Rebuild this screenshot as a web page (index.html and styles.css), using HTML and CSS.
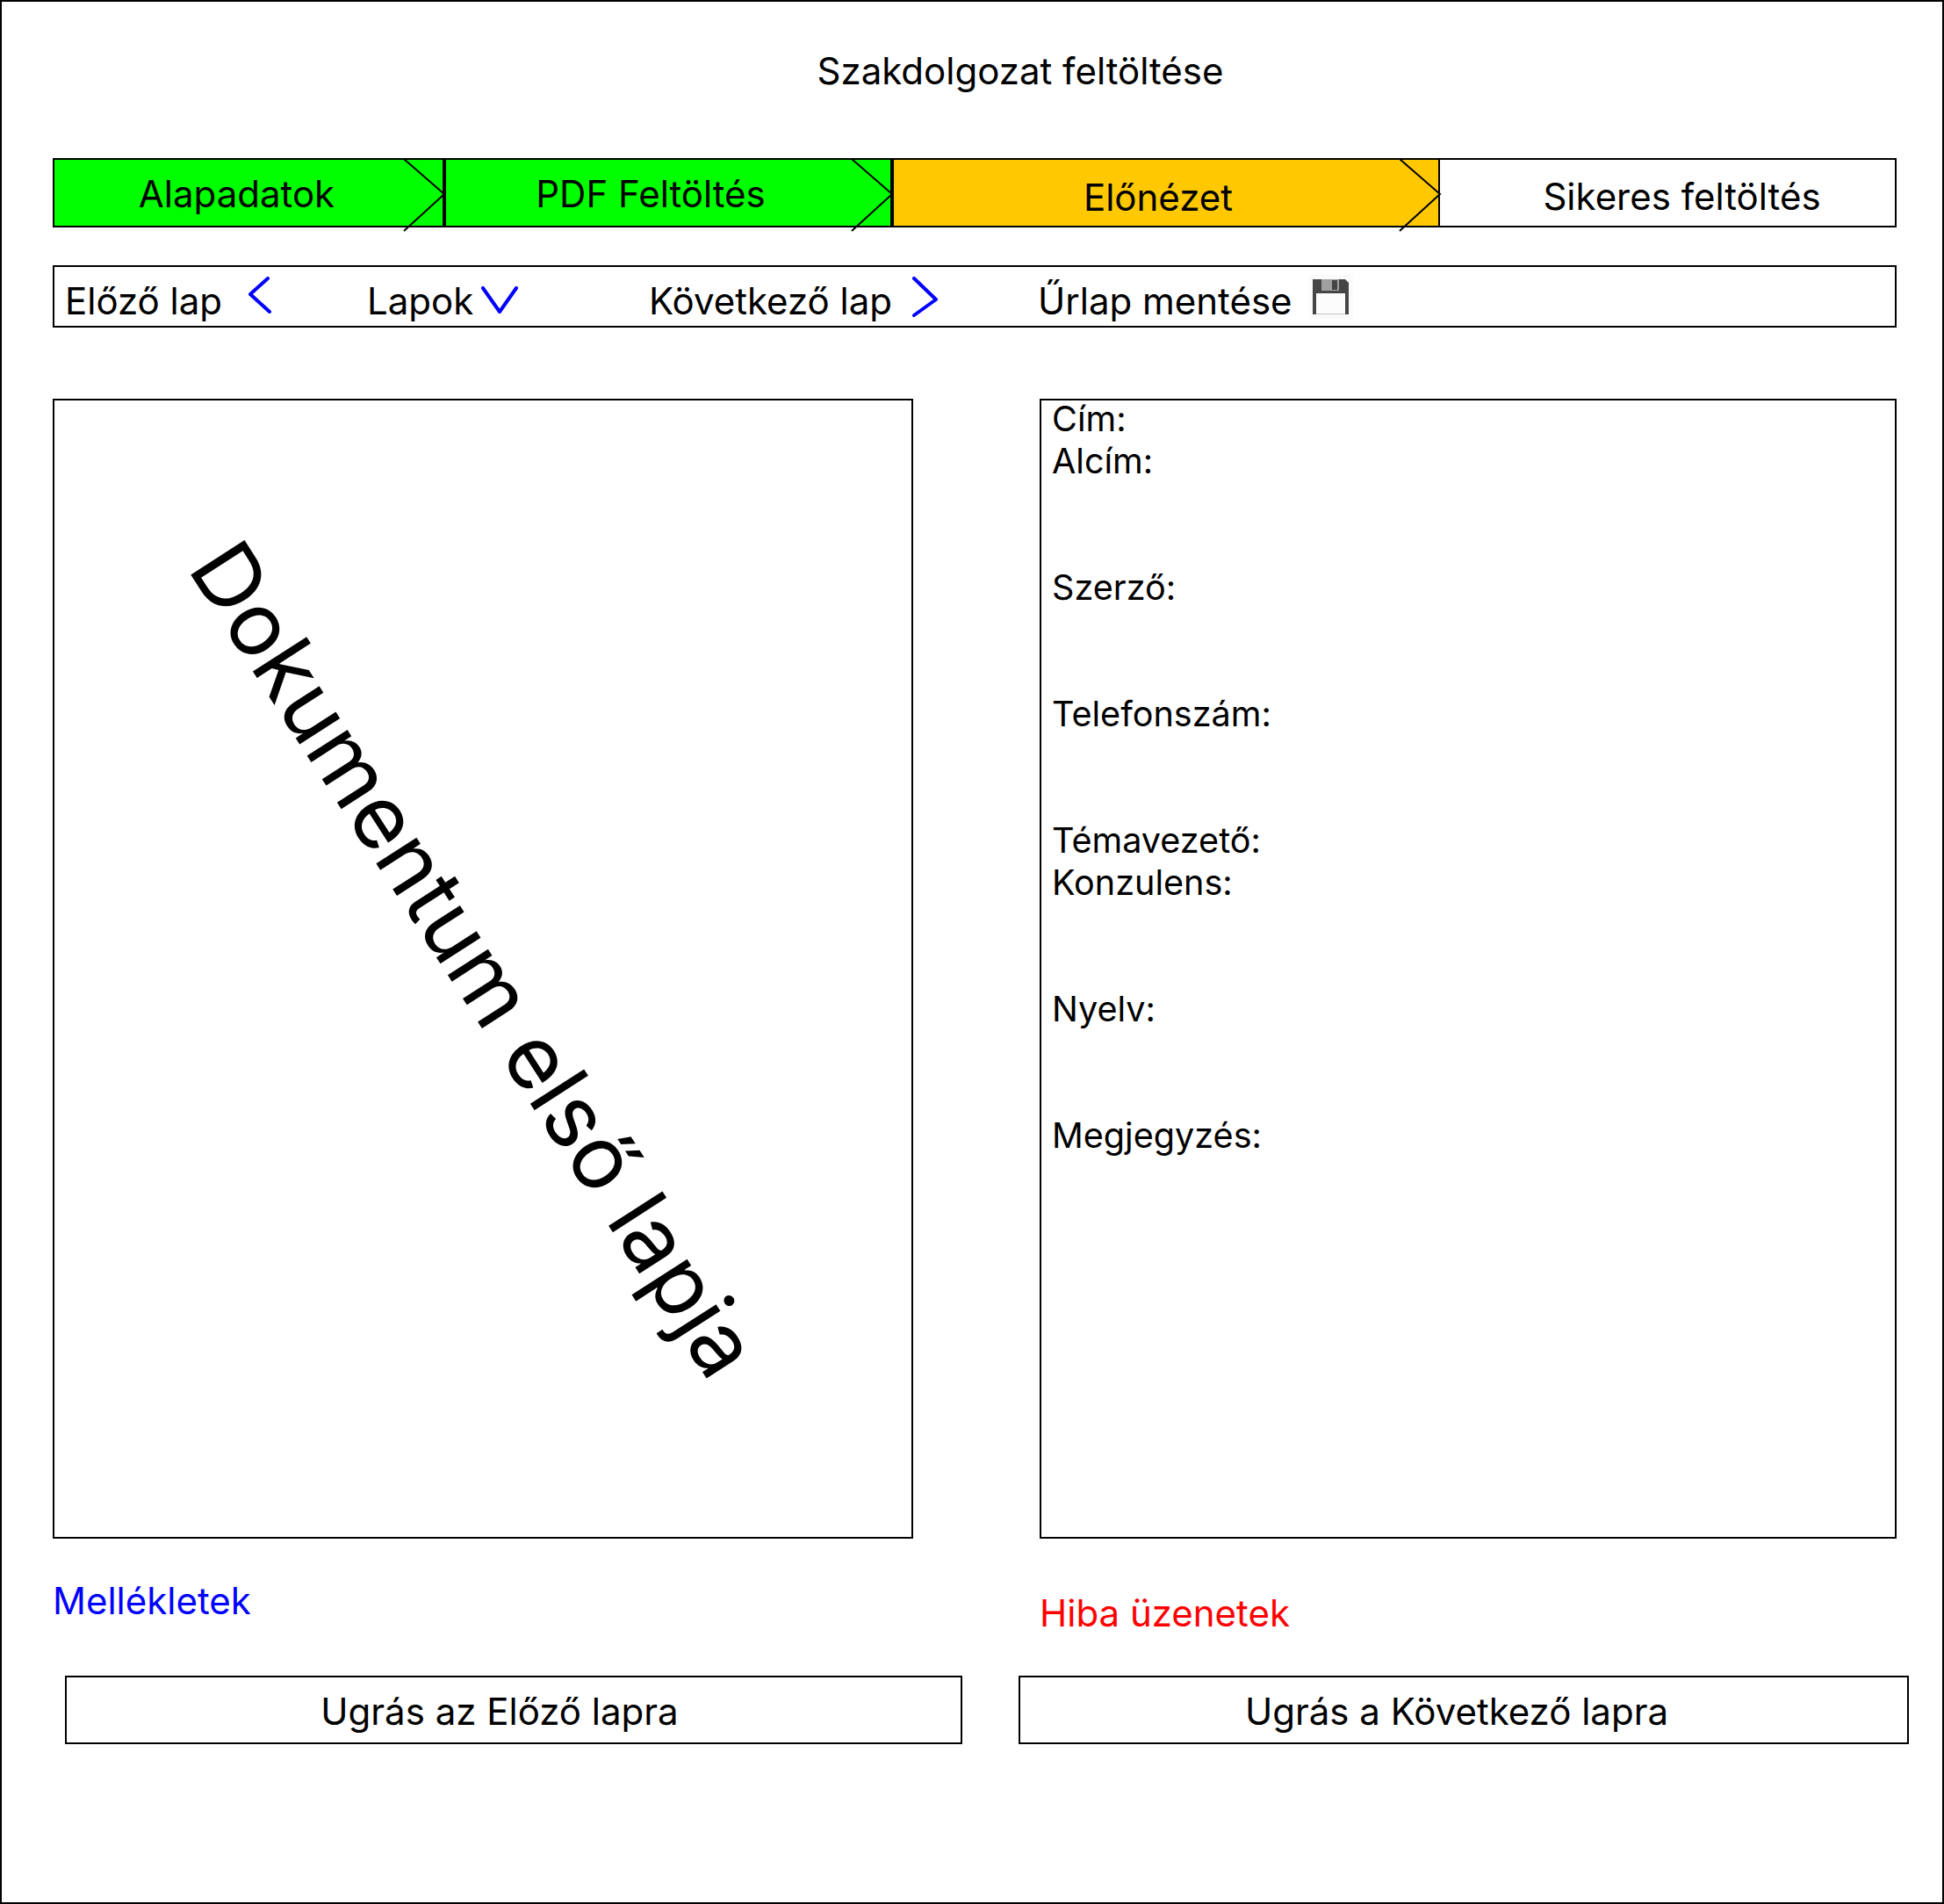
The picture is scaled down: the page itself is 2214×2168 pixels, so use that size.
FILE: index.html
```html
<!DOCTYPE html>
<html lang="hu">
<head>
    <meta charset="UTF-8">
    <title>Szakdolgozat feltöltése</title>
    <link rel="stylesheet" href="styles.css">
</head>
<body>
    <div class="page">
        <h1 class="title">Szakdolgozat feltöltése</h1>

        <div class="steps">
            <div class="step step-done step-first">
                <span>Alapadatok</span>
                <svg class="chevron" viewBox="0 0 48 84"><path d="M1 1 L47 41 L1 83"/></svg>
            </div>
            <div class="step step-done step-second">
                <span>PDF Feltöltés</span>
                <svg class="chevron" viewBox="0 0 48 84"><path d="M1 1 L47 41 L1 83"/></svg>
            </div>
            <div class="step step-current">
                <span>Előnézet</span>
                <svg class="chevron" viewBox="0 0 48 84"><path d="M1 1 L47 41 L1 83"/></svg>
            </div>
            <div class="step step-last">
                <span>Sikeres feltöltés</span>
            </div>
        </div>

        <div class="toolbar">
            <div class="tool tool-prev">
                <span>Előző lap</span>
                <svg class="arrow arrow-prev" viewBox="0 0 28 42"><path d="M22 2 L2 20 L24 40"/></svg>
            </div>
            <div class="tool tool-pages">
                <span>Lapok</span>
                <svg class="arrow arrow-down" viewBox="0 0 42 32"><path d="M2 2 L21 29 L40 2"/></svg>
            </div>
            <div class="tool tool-next">
                <span>Következő lap</span>
                <svg class="arrow arrow-next" viewBox="0 0 32 46"><path d="M3 2 L28 26 L3 44"/></svg>
            </div>
            <div class="tool tool-save">
                <span>Űrlap mentése</span>
                <svg class="save-icon" viewBox="0 0 50 50">
                    <rect width="50" height="50" fill="#fafafa"/>
                    <path d="M4 5 H41 L45 9 V45 H4 Z" fill="#464646"/>
                    <rect x="14" y="5" width="20" height="13" fill="#a0a0a0"/>
                    <rect x="26" y="6" width="6" height="11" fill="#464646"/>
                    <rect x="8" y="21" width="33" height="24" fill="#fcfcfc"/>
                    <rect x="8" y="44" width="33" height="1" fill="#c8c8c8"/>
                </svg>
            </div>
        </div>

        <div class="panels">
            <div class="panel panel-doc">
                <div class="doc-text">Dokumentum első lapja</div>
            </div>
            <div class="panel panel-form">
                <div class="form-first">Cím:</div>
                <div class="form-gap">Alcím:</div>
                <div class="form-gap">Szerző:</div>
                <div class="form-gap">Telefonszám:</div>
                <div>Témavezető:</div>
                <div class="form-gap">Konzulens:</div>
                <div class="form-gap">Nyelv:</div>
                <div>Megjegyzés:</div>
            </div>
        </div>

        <div class="notes">
            <div class="note-attach">Mellékletek</div>
            <div class="note-error">Hiba üzenetek</div>
        </div>

        <div class="jumps">
            <div class="jump jump-prev">Ugrás az Előző lapra</div>
            <div class="jump jump-next">Ugrás a Következő lapra</div>
        </div>
    </div>
</body>
</html>
```

FILE: styles.css
```css
* {
    box-sizing: border-box;
}
body {
    margin: 0;
    font-family: Inter, "Liberation Sans", sans-serif;
    font-size: 42px;
    line-height: 48px;
    color: #000;
}
.page {
    width: 2214px;
    height: 2168px;
    border: 2px solid #000;
    padding: 0 36px 0 58px;
}
.title {
    margin: 0;
    padding: 55px 0 0 88px;
    height: 178px;
    font-size: 42px;
    font-weight: 400;
    line-height: 48px;
    text-align: center;
}
.steps {
    display: flex;
    height: 79px;
    width: 2100px;
    border: 2px solid #000;
}
.step {
    position: relative;
    display: flex;
    align-items: center;
    justify-content: center;
    flex: none;
}
.step-done {
    background: #00ff00;
    border-right: 4px solid #000;
}
.step-first {
    width: 446px;
    padding: 3px 27px 0 0;
}
.step-second {
    width: 510px;
    padding: 3px 40px 0 0;
}
.step-current {
    width: 622px;
    background: #ffc800;
    border-right: 2px solid #000;
    padding: 10px 18px 0 0;
}
.step-last {
    flex: 1;
    padding: 9px 0 0 33px;
}
.chevron {
    position: absolute;
    top: -2px;
    right: -3px;
    width: 48px;
    height: 84px;
    fill: none;
    stroke: #000;
    stroke-width: 2;
    overflow: visible;
}
.toolbar {
    display: flex;
    align-items: center;
    width: 2100px;
    height: 71px;
    margin-top: 43px;
    border: 2px solid #000;
}
.tool {
    display: flex;
    align-items: center;
    flex: none;
    padding-top: 11px;
}
.tool-prev {
    width: 356px;
    padding-left: 12px;
}
.tool-pages {
    width: 321px;
}
.tool-next {
    width: 443px;
}
.arrow {
    fill: none;
    stroke: #0000ff;
    stroke-width: 4;
    stroke-linecap: round;
    stroke-linejoin: round;
    flex: none;
}
.arrow-prev {
    width: 28px;
    height: 42px;
    margin: -14px 0 0 30px;
}
.arrow-down {
    width: 42px;
    height: 32px;
    margin: -2px 0 0 9px;
}
.arrow-next {
    width: 32px;
    height: 46px;
    margin: -10px 0 0 22px;
}
.save-icon {
    width: 50px;
    height: 50px;
    margin: -11px 0 0 19px;
    flex: none;
}
.panels {
    display: flex;
    justify-content: space-between;
    width: 2100px;
    height: 1298px;
    margin-top: 81px;
}
.panel {
    border: 2px solid #000;
    height: 100%;
}
.panel-doc {
    position: relative;
    width: 980px;
    overflow: hidden;
}
.doc-text {
    position: absolute;
    left: 479px;
    top: 636px;
    font-size: 100px;
    line-height: 116px;
    white-space: nowrap;
    transform: translate(-50%, -50%) rotate(57.3deg);
}
.panel-form {
    width: 976px;
    padding: 0 0 0 12px;
    font-size: 39.6px;
}
.form-first {
    margin-top: -3px;
}
.form-gap {
    margin-bottom: 96px;
}
.notes {
    display: flex;
    width: 2100px;
    margin-top: 47px;
    height: 109px;
}
.note-attach {
    width: 1124px;
    color: #0000ff;
}
.note-error {
    color: #ff0000;
    padding-top: 14px;
}
.jumps {
    display: flex;
    margin-left: 14px;
    width: 2100px;
}
.jump {
    display: flex;
    align-items: center;
    justify-content: center;
    height: 78px;
    border: 2px solid #000;
    padding-top: 3px;
    flex: none;
}
.jump-prev {
    width: 1022px;
    padding-right: 32px;
}
.jump-next {
    width: 1014px;
    margin-left: 64px;
    padding-right: 16px;
}
```
